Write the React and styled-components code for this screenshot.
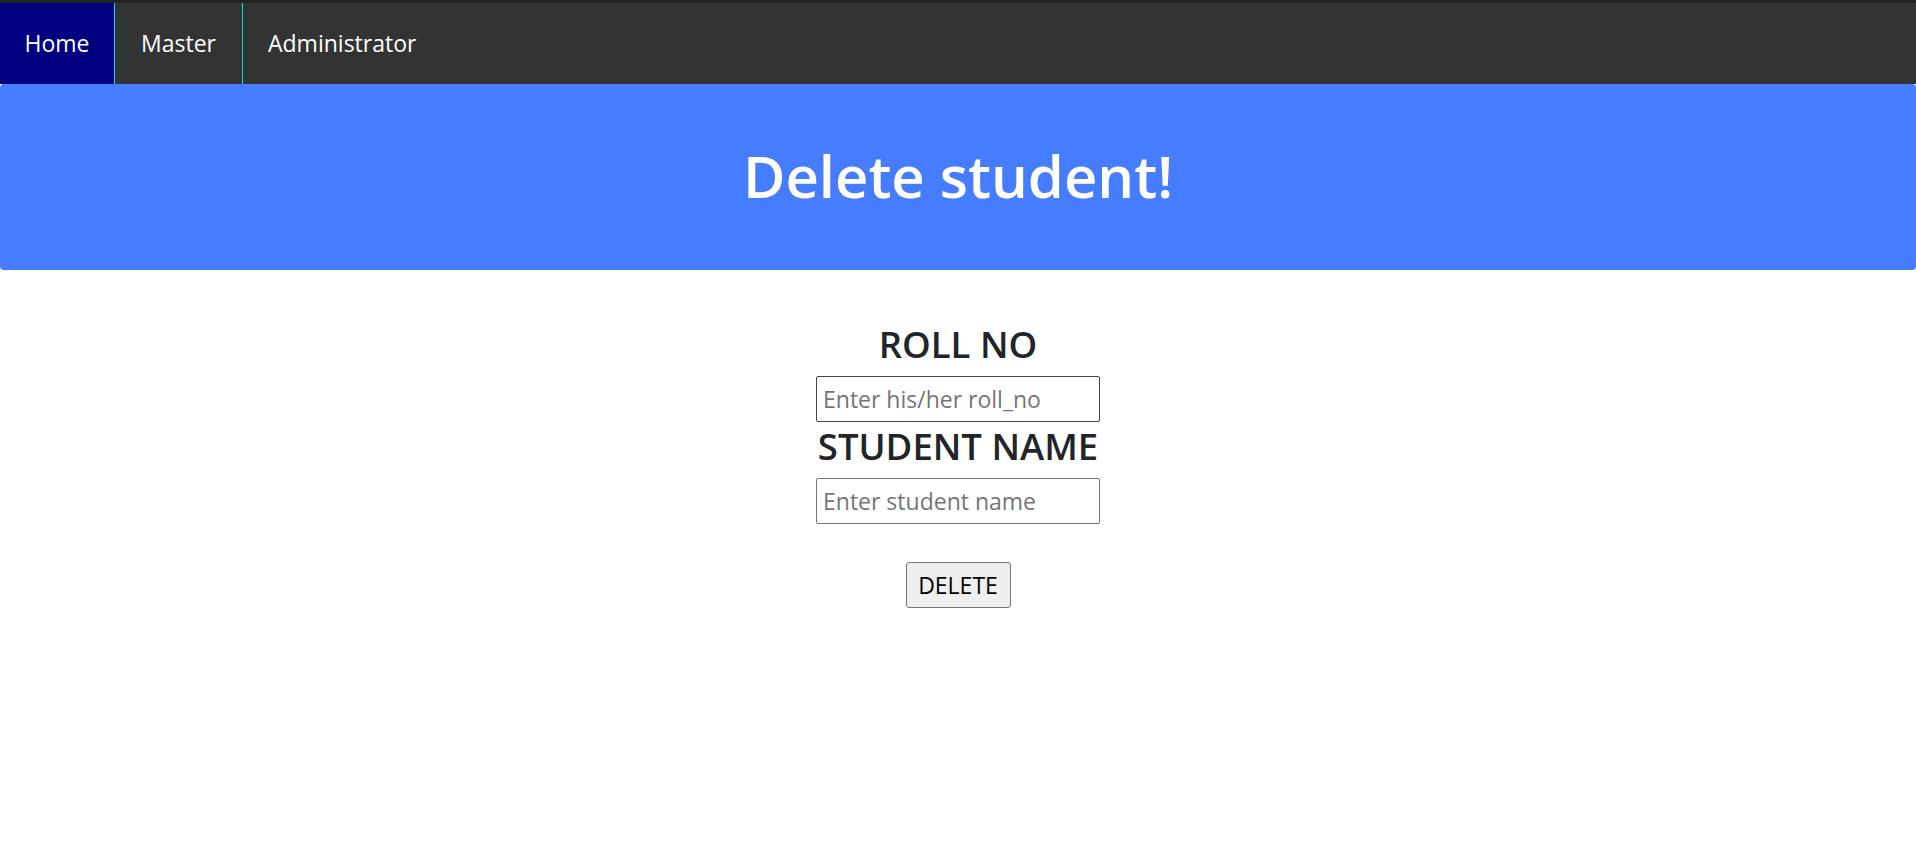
import React from "react";
import styled, { createGlobalStyle } from "styled-components";

const GlobalStyle = createGlobalStyle`
  body {
    margin: 0;
    background: #fff;
    font-family: "Open Sans", "Noto Sans", sans-serif;
  }
`;

const links = [
  { name: "Home", width: 115 },
  { name: "Master", width: 128 },
  { name: "Administrator" },
];

export default function App() {
  return (
    <>
      <GlobalStyle />
      <NavBar>
        {links.map((link, i) => (
          <NavLink
            key={link.name}
            active={i === 0}
            divider={i < 2}
            w={link.width}
          >
            {link.name}
          </NavLink>
        ))}
      </NavBar>
      <Jumbotron>
        <Title>Delete student!</Title>
      </Jumbotron>
      <DeleteForm onSubmit={e => e.preventDefault()}>
        <Label>ROLL NO</Label>
        <Field placeholder="Enter his/her roll_no" dark />
        <Label>STUDENT NAME</Label>
        <Field placeholder="Enter student name" />
        <SubmitButton type="submit">DELETE</SubmitButton>
      </DeleteForm>
    </>
  );
}

const NavBar = styled.nav`
  display: flex;
  height: 81px;
  background: #333;
  border-top: 3px solid #222;
`;

const NavLink = styled.a.withConfig({
  shouldForwardProp: p => !["active", "divider", "w"].includes(p),
})`
  box-sizing: border-box;
  display: flex;
  align-items: center;
  justify-content: center;
  flex: none;
  width: ${p => (p.w ? `${p.w}px` : "auto")};
  padding: 0 ${p => (p.w ? 0 : 25)}px 2px;
  color: #fff;
  font-size: 23px;
  text-decoration: none;
  background: ${p => (p.active ? "#000080" : "transparent")};
  border-right: ${p => (p.divider ? "1px solid #0bd9ee" : "none")};
`;

const Jumbotron = styled.header`
  display: flex;
  align-items: center;
  justify-content: center;
  height: 186px;
  background: #467cff;
  border-radius: 4px;
`;

const Title = styled.h1`
  margin: 0 0 4px;
  color: #fff;
  font-size: 58px;
  font-weight: 600;
`;

const DeleteForm = styled.form`
  display: flex;
  flex-direction: column;
  align-items: center;
  padding-top: 52px;
`;

const Label = styled.h3`
  margin: 0 0 10px;
  color: #212529;
  font-size: 36.5px;
  font-weight: 600;
  line-height: 44px;
`;

const Field = styled.input`
  box-sizing: border-box;
  width: 284px;
  height: 46px;
  margin: 0 0 2px;
  padding: 0 6px;
  font-family: inherit;
  font-size: 23px;
  color: #333;
  border: 1px solid ${p => (p.dark ? "#444" : "#767676")};
  border-radius: 2px;

  &::placeholder {
    color: #757575;
  }
`;

const SubmitButton = styled.button`
  margin-top: 36px;
  width: 105px;
  height: 46px;
  padding: 0;
  font-family: inherit;
  font-size: 23px;
  color: #000;
  background: #efefef;
  border: 1px solid #767676;
  border-radius: 3px;
`;
